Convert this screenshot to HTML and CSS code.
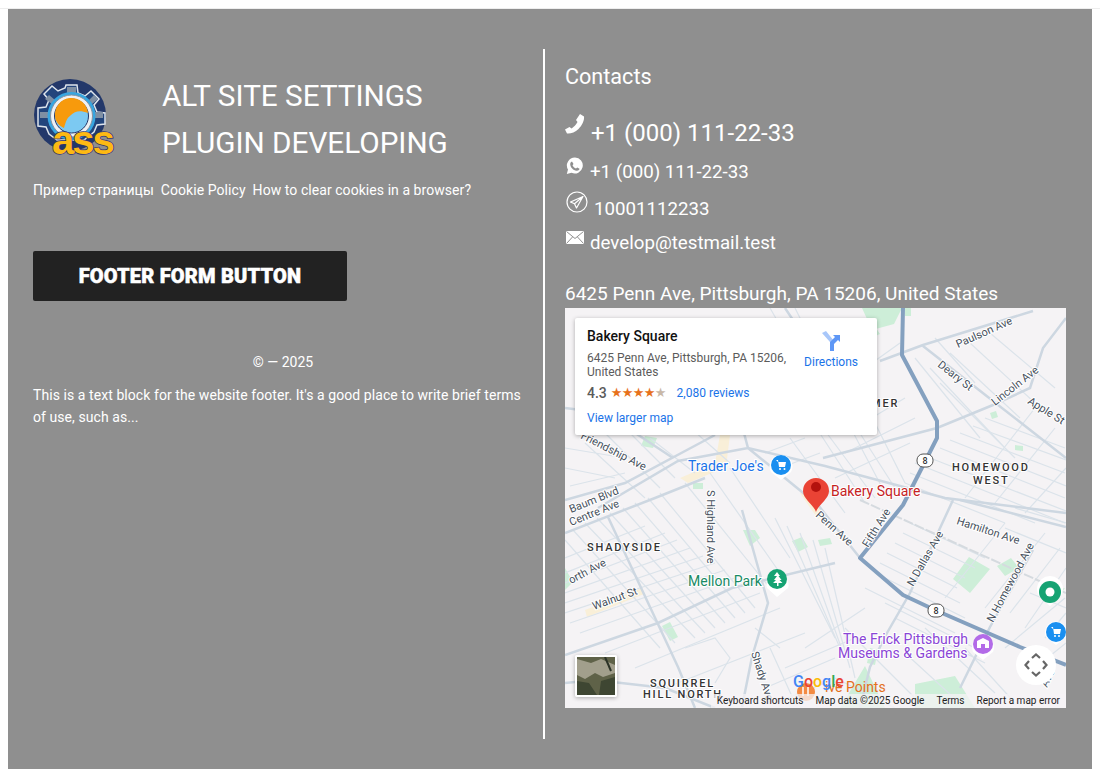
FILE: index.html
```html
<!DOCTYPE html>
<html lang="en">
<head>
    <meta charset="UTF-8">
    <title>Alt Site Settings</title>
    <link rel="stylesheet" href="styles.css">
</head>
<body>
    <div class="topline"></div>
    <footer class="footer">
        <!-- Kolom kiri -->
        <div class="col-left">
            <div class="brand">
                <svg class="logo" width="80" height="80" viewBox="0 0 80 80">
                    <circle cx="37" cy="37" r="36" fill="#23386a"/>
                    <path d="M33 7h11l1 8 7 3 6-5 8 8-5 6 3 7 8 1v11l-8 1-3 7-10 8H24l-8-6-3-7-8-1V30l8-1 3-7-5-6 8-8 6 5 7-3z" fill="#23457c" stroke="#dfe5ec" stroke-width="1.500"/>
                    <path d="M34 9h9v7h-9zM61 17l4 4-6 5-3-4zM12 21l4-4 6 5-3 4zM62 34h8v6h-8zM7 34h8v6H7z" fill="#7f8fa3"/>
                    <circle cx="38.500" cy="38" r="24" fill="#38a6e0"/>
                    <circle cx="38.500" cy="38" r="21" fill="#eef1f4" stroke="#8a93a0" stroke-width="1"/>
                    <circle cx="38.500" cy="38" r="17" fill="#7cc9f2" stroke="#23386a" stroke-width="1"/>
                    <path d="M22 38a16.500 16.500 0 0 1 33-3c-8-3-13-2-17 2-4 3-5 6-7 13-5-2-9-7-9-12z" fill="#f79a0c"/>
                    <text class="logo-text" x="19" y="76">ass</text>
                </svg>
                <div class="site-title">ALT SITE SETTINGS<br>PLUGIN DEVELOPING</div>
            </div>
            <nav class="links">
                <a href="#">Пример страницы</a>
                <a href="#">Cookie Policy</a>
                <a href="#">How to clear cookies in a browser?</a>
            </nav>
            <button class="btn-footer" type="button">FOOTER FORM BUTTON</button>
            <p class="copy">© — 2025</p>
            <p class="about">This is a text block for the website footer. It's a good place to write brief terms of use, such as...</p>
        </div>

        <!-- Kolom kanan -->
        <div class="col-right">
            <h3 class="contacts-title">Contacts</h3>
            <div class="contact contact-main">
                <svg class="ico ico-phone" width="20" height="20" viewBox="0 0 20 20"><path d="M15 0l4 2.500c.5 4-2 9-5.500 12.500S5 20 2 19.500L0 15.500l4.500-2.500 2 1.500c2-1 5-4.500 6-6.500L11 6z" fill="#fff"/></svg>
                <a href="#">+1 (000) 111-22-33</a>
            </div>
            <div class="contact contact-wa">
                <svg class="ico" width="18" height="18" viewBox="0 0 18 18"><path d="M9 .5a8 8 0 0 0-7 12L.8 17l4.700-1.200A8 8 0 1 0 9 .5z" fill="#fff"/><path d="M6 4.500l1.500 2.500-1 1.200c.6 1.400 2 2.700 3.500 3.300l1.200-1 2.300 1.300c-.3 1.600-1.700 2.100-3 1.900-3.300-.5-6-3.300-6.300-6.300 0-1.300.6-2.500 1.800-2.900z" fill="#8f8f8f"/></svg>
                <a href="#">+1 (000) 111-22-33</a>
            </div>
            <div class="contact contact-tg">
                <svg class="ico" width="22" height="22" viewBox="0 0 22 22" fill="none" stroke="#fff" stroke-width="1.200"><circle cx="11" cy="11" r="10"/><path d="M17 5.500L4.500 11l4 1.800L10.500 17zM8.500 12.800L17 5.500" stroke-linejoin="round"/></svg>
                <a href="#">10001112233</a>
            </div>
            <div class="contact contact-mail">
                <svg class="ico" width="18" height="13" viewBox="0 0 18 13"><path d="M0 0h18v13H0z" fill="#fff"/><path d="M.5 .5L9 7.500 17.500 .5M.5 12.500L6.500 6M17.500 12.500L11.500 6" fill="none" stroke="#8f8f8f"/></svg>
                <a href="#">develop@testmail.test</a>
            </div>
            <div class="address">6425 Penn Ave, Pittsburgh, PA 15206, United States</div>

            <div class="map">
                <svg class="map-svg" width="501" height="400" viewBox="0 0 501 400">
                    <rect width="501" height="400" fill="#f5f3f5"/>
                    <!-- taman -->
                    <g fill="#cdeed8">
                        <path d="M297 0h40l-8 16-22 6zM80 128l12 2-4 10-12-2zM293 20l14-6 8 12-14 6zM340 0h6v8h-6z"/>
                        <path d="M227 233l10-4 6 10-10 5zM178 222l12 0 5 8-10 8zM253 232l12-2 2 6-12 2zM97 318l8-4 8 15-8 4zM388 271l16-22 21 12-20 24zM432 258l14-8 8 10-14 8zM500 280l-10 2 2 8zM215 80h14v10h-14zM425 105l6-2 2 6-6 2zM450 137l8 1 0 5-8-1zM128 175l10 0 0 6-10 0z"/>
                        <path d="M0 260l8 14-8 8zM305 340l8 2-3 15-8-2zM300 358l-25 42h45zM350 376l40-8 20 32h-60z"/>
                    </g>
                    <g fill="#f9efd8">
                        <path d="M115 170l35-15 5-28 10 0-4 32-38 16zM235 185l18 26 7-4-17-27zM20 302l57-22 2 6-57 23z"/>
                    </g>
                    <!-- jalan kecil -->
                    <g fill="none" stroke="#dbe3ea" stroke-width="1.200">
                        <path d="M0 232L95 340M20 215L130 330M45 205L150 320M70 195L170 310M95 185L190 300M120 175L205 280M145 165L215 265M165 160L225 250M8 222L110 335M32 210L140 325M58 200L160 315M83 190L180 305"/>
                        <path d="M0 265L100 225M0 285L125 240M0 305L150 255M15 325L170 270M40 345L195 285M70 360L215 300M100 380L240 325M0 250L80 218M0 275L112 232M0 295L138 248M5 315L160 262"/>
                        <path d="M210 210L270 330M235 225L280 350M260 240L290 370M240 340L300 300M220 360L290 330M200 380L270 350M210 395L260 375M222 218L275 340M248 232L285 360M205 340L230 395M120 340L150 330L165 350L150 375M190 320L215 340"/>
                        <path d="M295 85L340 175M270 90L320 185M245 110L300 195M225 130L280 205M290 120L340 90M280 145L350 110M270 170L345 135M300 60L335 35M365 60L440 140M385 45L455 110M405 35L470 95M425 25L490 80M370 30L410 75M375 75L450 150M350 50L415 130M282 105L330 180M258 120L310 190"/>
                        <path d="M340 175L440 215M350 155L500 215M375 140L500 190M395 125L500 165M420 110L500 140M400 190L470 100M430 195L490 120M460 205L501 160M345 165L470 215M360 148L501 203M385 132L501 178M408 118L501 152"/>
                        <path d="M310 265L400 310M300 280L390 325M330 310L420 355M360 320L430 385M280 320L350 390M400 340L450 395M380 290L440 215M420 300L480 225M460 320L501 260M440 340L500 290M470 360L501 335M270 370L330 400M320 295L410 340M340 345L400 400M445 305L495 240M480 330L501 305"/>
                        <path d="M345 215L420 250M330 235L400 270M440 220L501 245M450 200L501 215M465 285L501 300M338 225L410 260M322 245L392 280M315 255L395 295"/>
                        <path d="M205 0L225 35M230 0L240 20M0 140L60 150M0 160L50 170M20 135L80 190M60 120L110 170M120 115L165 155M200 145L240 130M215 160L255 145M85 130L130 165M40 125L95 180M5 178L60 165"/>
                    </g>
                    <!-- jalan besar -->
                    <g fill="none" stroke="#cdd7e1" stroke-width="2.500">
                        <path d="M0 100L40 105L108 150M33 200L113 153L183 140L260 158L380 190L501 205M0 192L60 175L150 127M175 110L183 140L253 197L295 250"/>
                        <path d="M43 209L113 359L130 400M0 225L90 190L140 170M177 202L203 295L187 349L177 399"/>
                        <path d="M0 347L93 315L167 280L270 255"/>
                        <path d="M388 192L345 285L322 325L305 359L295 400M395 192L501 219M468 242L425 319L395 380"/>
                        <path d="M258 150L372 120L428 97L465 80L478 40L501 10M315 53L358 37L468 3M358 38L428 93L501 150"/>
                        <path d="M0 375L30 372L100 380L150 400M220 0L250 45"/>
                    </g>
                    <path d="M295 192L501 285" fill="none" stroke="#d5dadf" stroke-width="2" stroke-dasharray="10 2"/>
                    <path d="M338 0L337 47L372 113L372 130L338 197L295 250L338 287L370 302L455 339L501 357" fill="none" stroke="#84a0bf" stroke-width="4" stroke-linejoin="round"/>

                    <!-- jalan: nama -->
                    <g class="street">
                        <text transform="translate(393 40) rotate(-24)">Paulson Ave</text>
                        <text transform="translate(372 58) rotate(38)">Deary St</text>
                        <text transform="translate(430 98) rotate(-38)">Lincoln Ave</text>
                        <text transform="translate(462 95) rotate(32)">Apple St</text>
                        <text transform="translate(15 130) rotate(27)">Friendship Ave</text>
                        <text transform="translate(6 205) rotate(-22)">Baum Blvd</text>
                        <text transform="translate(6 218) rotate(-22)">Centre Ave</text>
                        <text transform="translate(142 182) rotate(90)">S Highland Ave</text>
                        <text transform="translate(250 208) rotate(42)">Penn Ave</text>
                        <text transform="translate(303 240) rotate(-58)">Fifth Ave</text>
                        <text transform="translate(6 276) rotate(-28)">orth Ave</text>
                        <text transform="translate(29 302) rotate(-20)">Walnut St</text>
                        <text transform="translate(186 345) rotate(72)">Shady Ave</text>
                        <text transform="translate(348 279) rotate(-60)">N Dallas Ave</text>
                        <text transform="translate(391 216) rotate(18)">Hamilton Ave</text>
                        <text transform="translate(428 315) rotate(-62)">N Homewood Ave</text>
                        <text transform="translate(482 380) rotate(-65)">Ave</text>
                    </g>
                    <g class="area">
                        <text x="306" y="99">MER</text>
                        <text x="387" y="163">HOMEWOOD</text>
                        <text x="408" y="176">WEST</text>
                        <text x="22" y="243">SHADYSIDE</text>
                        <text x="85" y="379">SQUIRREL</text>
                        <text x="78" y="390">HILL NORTH</text>
                    </g>

                    <!-- marka jalan 8 -->
                    <g class="shield">
                        <rect x="352" y="146" width="16" height="13" rx="6" fill="#fff" stroke="#555"/>
                        <text x="360" y="156">8</text>
                        <rect x="363" y="296" width="16" height="13" rx="6" fill="#fff" stroke="#555"/>
                        <text x="371" y="306">8</text>
                    </g>

                    <!-- tempat -->
                    <text class="poi poi-blue" x="123" y="163">Trader Joe's</text>
                    <path d="M216 172l-10-8a11.500 11.500 0 1 1 20 0z" fill="#fff"/>
                    <circle cx="216" cy="157" r="10" fill="#1a8ff0"/>
                    <path d="M211 152h2l1 7h6l1-5h-8" fill="#fff"/><circle cx="215" cy="161" r="1" fill="#fff"/><circle cx="219.500" cy="161" r="1" fill="#fff"/>

                    <text class="poi poi-green" x="123" y="278">Mellon Park</text>
                    <path d="M212 289l-10-9a11 11 0 1 1 21 0z" fill="#fff"/>
                    <circle cx="212" cy="271" r="10" fill="#16a373"/>
                    <path d="M212 264l3 4h-1.500l3 4h-2l3 3h-4v3h-1.500v-3h-4l3-3h-2l3-4H209z" fill="#fff"/>

                    <text class="poi poi-purple" x="278" y="336">The Frick Pittsburgh</text>
                    <text class="poi poi-purple" x="273" y="350">Museums &amp; Gardens</text>
                    <path d="M418 352l-10-8a11 11 0 1 1 20 0z" fill="#fff"/>
                    <circle cx="418" cy="336" r="10" fill="#b36be8"/>
                    <path d="M412 333l6-3 6 3v7h-12z" fill="#fff"/><path d="M416 336h4v4h-4z" fill="#b36be8"/>

                    <path d="M485 298l-11-10a13 13 0 1 1 22 0z" fill="#fff"/>
                    <circle cx="485" cy="284" r="11" fill="#16a373"/>
                    <circle cx="485" cy="284" r="4.500" fill="#fff"/>

                    <path d="M491 337l-10-8a11 11 0 1 1 20 0z" fill="#fff"/>
                    <circle cx="491" cy="324" r="10" fill="#1a8ff0"/>
                    <path d="M486 319h2l1 7h6l1-5h-8" fill="#fff"/><circle cx="490" cy="328" r="1" fill="#fff"/><circle cx="494" cy="328" r="1" fill="#fff"/>

                    <circle cx="241" cy="384" r="9" fill="#f38b43"/>
                    <path d="M238 379v9M243 379v9" stroke="#fff" stroke-width="1.500"/>
                    <text class="poi-plain" x="260" y="384">ive Points</text>
                    <text class="google" x="228" y="379"><tspan fill="#4285f4">G</tspan><tspan fill="#ea4335">o</tspan><tspan fill="#fbbc05">o</tspan><tspan fill="#4285f4">g</tspan><tspan fill="#34a853">l</tspan><tspan fill="#ea4335">e</tspan></text>

                    <text class="poi poi-red" x="266" y="188">Bakery Square</text>
                    <path d="M251 204c-2-7-13-13-13-21a13 13 0 1 1 26 0c0 8-11 14-13 21z" fill="#ea4335"/>
                    <circle cx="251" cy="179" r="5" fill="#b3120e"/>
                </svg>

                <div class="map-card">
                    <div class="card-top">
                        <div class="card-info">
                            <div class="card-name">Bakery Square</div>
                            <div class="card-addr">6425 Penn Ave, Pittsburgh, PA 15206, United States</div>
                        </div>
                        <a class="card-dir" href="#">
                            <svg width="20" height="20" viewBox="0 0 20 20">
                                <path d="M1 2l8 9v9h4V10L5 0z" fill="#a8c7fa"/>
                                <path d="M9 20v-9l5-5-2-2h7v7l-2-2-4 4v7z" fill="#5e97f6"/>
                            </svg>
                            <span>Directions</span>
                        </a>
                    </div>
                    <div class="card-rating">
                        <span class="score">4.3</span>
                        <span class="stars">★★★★<span class="star-half">★</span></span>
                        <a class="reviews" href="#">2,080 reviews</a>
                    </div>
                    <a class="card-larger" href="#">View larger map</a>
                </div>

                <div class="map-thumb"><svg width="38" height="38" viewBox="0 0 38 38">
                    <rect width="38" height="38" fill="#5f6248"/>
                    <path d="M0 2l14 4 10-4 14 6v8l-12 4-8-4-10 6-8-4z" fill="#a29f8c"/>
                    <path d="M0 24l12 2 8 12H0zM24 24l14-4v18H22z" fill="#3e4632"/>
                    <path d="M28 0l6 14" stroke="#2c3327" stroke-width="2"/>
                </svg></div>

                <div class="map-ctrl"><svg width="24" height="24" viewBox="0 0 24 24" fill="none" stroke="#666" stroke-width="2.200">
                    <path d="M8 5l4-3.500L16 5M19 8l3.500 4L19 16M16 19l-4 3.500L8 19M5 16l-3.500-4L5 8"/>
                </svg></div>

                <div class="map-legal">
                    <span>Keyboard shortcuts</span>
                    <span>Map data ©2025 Google</span>
                    <span>Terms</span>
                    <span>Report a map error</span>
                </div>
            </div>
        </div>
    </footer>
</body>
</html>
```

FILE: styles.css
```css
/* Style dasar */
body {
    font-family: Roboto, Arial, sans-serif;
    margin: 0;
    background-color: #fff;
    color: #fff;
}

a {
    color: inherit;
    text-decoration: none;
}

.topline {
    margin-top: 8px;
    height: 1px;
    background-color: #eee;
}

.footer {
    display: flex;
    margin: 0 8px;
    padding: 40px 0 30px;
    background-color: #8f8f8f;
}

/* Kolom kiri */
.col-left {
    box-sizing: border-box;
    width: 535px;
    height: 690px;
    padding: 23px 10px 0 25px;
}

.brand {
    display: flex;
    align-items: flex-start;
    gap: 49px;
    height: 94px;
}

.logo {
    flex: none;
    margin-top: 6px;
    overflow: visible;
}

.logo-text {
    font-family: "Liberation Sans", sans-serif;
    font-size: 40px;
    font-weight: 700;
    fill: #fdb913;
    stroke: #33336b;
    stroke-width: 1.500;
    paint-order: stroke;
    letter-spacing: -2px;
}

.site-title {
    font-size: 29.700px;
    line-height: 47px;
}

.links {
    display: flex;
    gap: 7px;
    margin-top: 16px;
    font-size: 14px;
    line-height: 16px;
    letter-spacing: 0.060px;
}

.btn-footer {
    display: block;
    width: 314px;
    height: 50px;
    margin-top: 53px;
    padding: 0;
    border: none;
    border-radius: 2px;
    background-color: #222;
    color: #fff;
    font-family: Roboto, Arial, sans-serif;
    font-size: 20px;
    font-weight: 900;
    letter-spacing: 0.200px;
    -webkit-text-stroke: 0.500px #fff;
}

.copy {
    margin: 52px 0 0;
    font-size: 14px;
    line-height: 18px;
    text-align: center;
}

.about {
    margin: 13px 0 0;
    font-size: 14px;
    line-height: 22px;
    letter-spacing: 0.070px;
}

/* Kolom kanan */
.col-right {
    box-sizing: border-box;
    width: 549px;
    height: 690px;
    padding: 15px 26px 0 20px;
    border-left: 2px solid #fff;
}

.contacts-title {
    margin: 0;
    font-size: 21.600px;
    font-weight: 400;
    line-height: 26px;
}

.contact {
    display: flex;
    align-items: flex-start;
}

.ico {
    flex: none;
}

.contact-main {
    margin-top: 28px;
    font-size: 24px;
    line-height: 30px;
}

.ico-phone {
    margin: -4px 6px 0 0;
}

.contact-wa {
    margin-top: 9px;
    font-size: 18.720px;
    line-height: 30px;
}

.contact-wa .ico {
    margin: 0 6px 0 1px;
}

.contact-tg {
    margin-top: 7px;
    font-size: 18.720px;
    line-height: 30px;
}

.contact-tg .ico {
    margin: -3px 6px 0 1px;
}

.contact-mail {
    margin-top: 4px;
    font-size: 18.720px;
    line-height: 30px;
}

.contact-mail .ico {
    margin: 3px 6px 0 1px;
}

.address {
    margin-top: 24px;
    font-size: 19px;
    line-height: 24px;
}

/* Peta */
.map {
    position: relative;
    width: 501px;
    height: 400px;
    margin-top: 2px;
    overflow: hidden;
    color: #222;
}

.map-svg {
    display: block;
}

.street text {
    font-size: 11px;
    fill: #46505c;
    stroke: #fff;
    stroke-width: 2px;
    paint-order: stroke;
}

.area text {
    font-size: 11px;
    font-weight: 500;
    letter-spacing: 1.800px;
    fill: #333;
    stroke: #fff;
    stroke-width: 2px;
    paint-order: stroke;
}

.shield text {
    font-size: 9px;
    font-weight: 500;
    text-anchor: middle;
    fill: #333;
}

.poi {
    font-size: 14px;
    stroke: #fff;
    stroke-width: 2px;
    paint-order: stroke;
}

.poi-blue { fill: #1a73e8; }
.poi-green { fill: #188a65; }
.poi-purple { fill: #8a45d6; }
.poi-red { fill: #c5221f; }

.poi-plain {
    font-size: 14px;
    fill: #e3701c;
}

.google {
    font-size: 16px;
    font-weight: 500;
}

.map-card {
    position: absolute;
    top: 10px;
    left: 10px;
    box-sizing: border-box;
    width: 302px;
    height: 117px;
    padding: 9px 12px 0;
    border-radius: 2px;
    background-color: #fff;
    box-shadow: 0 1px 4px rgba(0,0,0,0.3);
    font-size: 12px;
}

.card-top {
    display: flex;
    justify-content: space-between;
}

.card-info {
    width: 205px;
}

.card-name {
    font-size: 14px;
    font-weight: 500;
    line-height: 18px;
    color: #111;
}

.card-addr {
    margin-top: 6px;
    font-size: 12px;
    line-height: 14px;
    color: #5b5b5b;
}

.card-dir {
    display: flex;
    flex-direction: column;
    align-items: center;
    margin: 4px 7px 0 0;
    color: #1a73e8;
}

.card-dir span {
    margin-top: 4px;
    line-height: 14px;
}

.card-rating {
    display: flex;
    align-items: center;
    margin-top: 5px;
    line-height: 18px;
}

.score {
    font-size: 14px;
    font-weight: 500;
    color: #5b5b5b;
}

.stars {
    margin-left: 4px;
    font-family: "DejaVu Sans", sans-serif;
    font-size: 13px;
    letter-spacing: -0.700px;
    color: #e7711b;
}

.star-half {
    color: #c9b8a8;
}

.reviews {
    margin-left: 11px;
    color: #1a73e8;
}

.card-larger {
    display: block;
    margin-top: 9px;
    color: #1a73e8;
}

.map-thumb {
    position: absolute;
    left: 10px;
    top: 347px;
    width: 38px;
    height: 38px;
    border: 2px solid #fff;
    border-radius: 2px;
    box-shadow: 0 1px 4px rgba(0,0,0,0.3);
}

.map-thumb svg {
    display: block;
}

.map-ctrl {
    position: absolute;
    top: 337px;
    left: 451px;
    display: flex;
    align-items: center;
    justify-content: center;
    width: 40px;
    height: 40px;
    border-radius: 50%;
    background-color: #fff;
}

.map-legal {
    position: absolute;
    right: 0;
    bottom: 0;
    display: flex;
    gap: 12px;
    padding: 0 6px;
    height: 14px;
    background-color: rgba(245,243,245,0.75);
    font-size: 10px;
    line-height: 14px;
    color: #222;
}
```
